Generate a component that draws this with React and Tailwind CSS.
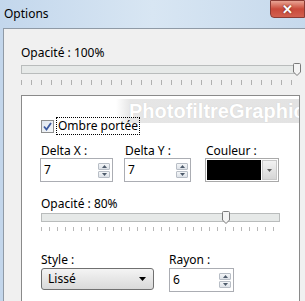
import React from "react";

const font = { fontFamily: '"Noto Sans", "Open Sans", sans-serif' };

function Spinner() {
  return (
    <div className="flex flex-col gap-[1px]">
      <div className="w-[12px] h-[7px] border border-[#b8bec6] bg-gradient-to-b from-[#f4f6f8] to-[#dde2e8] rounded-[1px] flex items-center justify-center">
        <svg width="5" height="3" viewBox="0 0 5 3"><path d="M0 3 L2.5 0 L5 3Z" fill="#4d5a6a" /></svg>
      </div>
      <div className="w-[12px] h-[7px] border border-[#b8bec6] bg-gradient-to-b from-[#f4f6f8] to-[#dde2e8] rounded-[1px] flex items-center justify-center">
        <svg width="5" height="3" viewBox="0 0 5 3"><path d="M0 0 L2.5 3 L5 0Z" fill="#4d5a6a" /></svg>
      </div>
    </div>
  );
}

function NumInput({ value, w }) {
  return (
    <div className={`${w} h-[24px] border border-[#abadb3] bg-white flex items-center pl-[3px] pr-[2px]`}>
      <span className="flex-1 text-[12px] text-black leading-none">{value}</span>
      <Spinner />
    </div>
  );
}

function Thumb() {
  return (
    <svg width="8" height="13" viewBox="0 0 8 13">
      <path d="M0.5 1.5 Q0.5 0.5 1.5 0.5 H6.5 Q7.5 0.5 7.5 1.5 V9 L4 12.5 L0.5 9 Z" fill="#f4f4f4" stroke="#7a7a7a" />
    </svg>
  );
}

export default function App() {
  return (
    <div className="w-[305px] h-[301px] overflow-hidden relative bg-gradient-to-r from-[#c3d7ec] via-[#d8e6f3] to-[#c6d9ec]" style={font}>
      {/* title bar */}
      <div className="h-[28px] flex items-start relative">
        <span className="ml-[4px] mt-[6px] text-[12px] text-black leading-[16px]">Options</span>
        <div className="absolute right-0 top-0 w-[35px] h-[18px] rounded-bl-[4px] border border-[#8a3b34] bg-gradient-to-b from-[#e8a394] via-[#c9493a] to-[#d2604f] flex items-center justify-center">
          <span className="text-white font-bold text-[13px] leading-none" style={{ textShadow: "0 0 2px #5a1a12" }}>✕</span>
        </div>
      </div>
      {/* body */}
      <div className="flex h-[273px]">
        <div className="w-[3px] bg-[#c3d6eb]" />
        <div className="flex-1 bg-[#f0f0f0] border-t border-l border-[#8f9aa6] relative">
          <div className="pl-[17px] pt-[16px]">
            <div className="text-[12px] leading-[16px] text-black">Opacité : 100%</div>
            <div className="relative mt-[4px] w-[278px] h-[10px]">
              <div className="h-[9px] border border-[#b9bcbc] bg-[#e6e9e8]" />
              <div className="absolute right-[-2px] top-[-2px]"><Thumb /></div>
            </div>
            <div className="mt-[5px] w-[278px] h-[5px] bg-[repeating-linear-gradient(90deg,#b0b0b0_0_1px,transparent_1px_10px)]" />
            {/* inner panel */}
            <div className="mt-[10px] w-[279px] h-[220px] bg-white border-t border-l border-r border-[#8a8a8a] relative">
              <div className="absolute left-[94px] right-0 top-[3px] h-[24px] bg-[linear-gradient(90deg,#ffffff_0px,#e6e6e6_14px,#e3e3e3_100%)] flex items-center pl-[13px] overflow-hidden">
                <span className="text-white font-bold text-[20px] leading-none whitespace-nowrap" style={{ fontFamily: '"Liberation Sans", Arial, sans-serif', textShadow: "0 0 1px #c8c8c8" }}>PhotofiltreGraphic</span>
              </div>
              <div className="absolute left-[19px] top-[21px] flex items-center">
                <div className="w-[13px] h-[13px] border border-[#8e8f8f] bg-gradient-to-br from-[#dfe6ee] to-[#f6f8fa] flex items-center justify-center">
                  <svg width="9" height="9" viewBox="0 0 9 9"><path d="M1 4.5 L3.5 7.5 L8 1" fill="none" stroke="#3c5aa0" strokeWidth="1.8" /></svg>
                </div>
                <span className="ml-[2px] px-[1px] border border-dotted border-black text-[12px] leading-[16px] text-black">Ombre portée</span>
              </div>
              {/* Delta row */}
              <div className="absolute left-[18px] top-[48px] flex gap-[11px]">
                <div>
                  <div className="text-[12px] leading-[14px] text-black ml-[1px]">Delta X :</div>
                  <div><NumInput value="7" w="w-[73px]" /></div>
                </div>
                <div>
                  <div className="text-[12px] leading-[14px] text-black ml-[1px]">Delta Y :</div>
                  <div><NumInput value="7" w="w-[67px]" /></div>
                </div>
                <div className="ml-[3px]">
                  <div className="text-[12px] leading-[14px] text-black ml-[1px]">Couleur :</div>
                  <div className="w-[74px] h-[24px] border border-[#a9a9a9] bg-white p-[1px] flex gap-[1px]">
                    <div className="flex-1 bg-black" />
                    <div className="w-[15px] bg-gradient-to-b from-[#f2f2f2] to-[#d6d6d6] border border-[#c8c8c8] flex items-center justify-center">
                      <svg width="5" height="3" viewBox="0 0 5 3"><path d="M0 0 L2.5 3 L5 0Z" fill="#606060" /></svg>
                    </div>
                  </div>
                </div>
              </div>
              {/* Opacité 80 */}
              <div className="absolute left-[19px] top-[101px]">
                <div className="text-[12px] leading-[14px] text-black">Opacité : 80%</div>
                <div className="relative mt-[2px] w-[239px] h-[10px]">
                  <div className="h-[9px] border border-[#b9bcbc] bg-[#e6e9e8]" />
                  <div className="absolute left-[181px] top-[-2px]"><Thumb /></div>
                </div>
                <div className="mt-[4px] w-[239px] h-[4px] bg-[repeating-linear-gradient(90deg,#b8b8b8_0_1px,transparent_1px_8px)]" />
              </div>
              {/* Style / Rayon */}
              <div className="absolute left-[19px] top-[157px] flex gap-[15px]">
                <div>
                  <div className="text-[12px] leading-[14px] text-black">Style :</div>
                  <div className="mt-[1px] w-[113px] h-[22px] rounded-[3px] border border-[#707070] bg-gradient-to-b from-[#f4f4f4] to-[#d9d9d9] flex items-center pl-[6px] pr-[7px]">
                    <span className="flex-1 text-[12px] leading-none text-black">Lissé</span>
                    <svg width="7" height="4" viewBox="0 0 7 4"><path d="M0 0 L3.5 4 L7 0Z" fill="#000" /></svg>
                  </div>
                </div>
                <div>
                  <div className="text-[12px] leading-[14px] text-black">Rayon :</div>
                  <div className="mt-[1px]"><NumInput value="6" w="w-[65px]" /></div>
                </div>
              </div>
            </div>
          </div>
        </div>
      </div>
    </div>
  );
}
